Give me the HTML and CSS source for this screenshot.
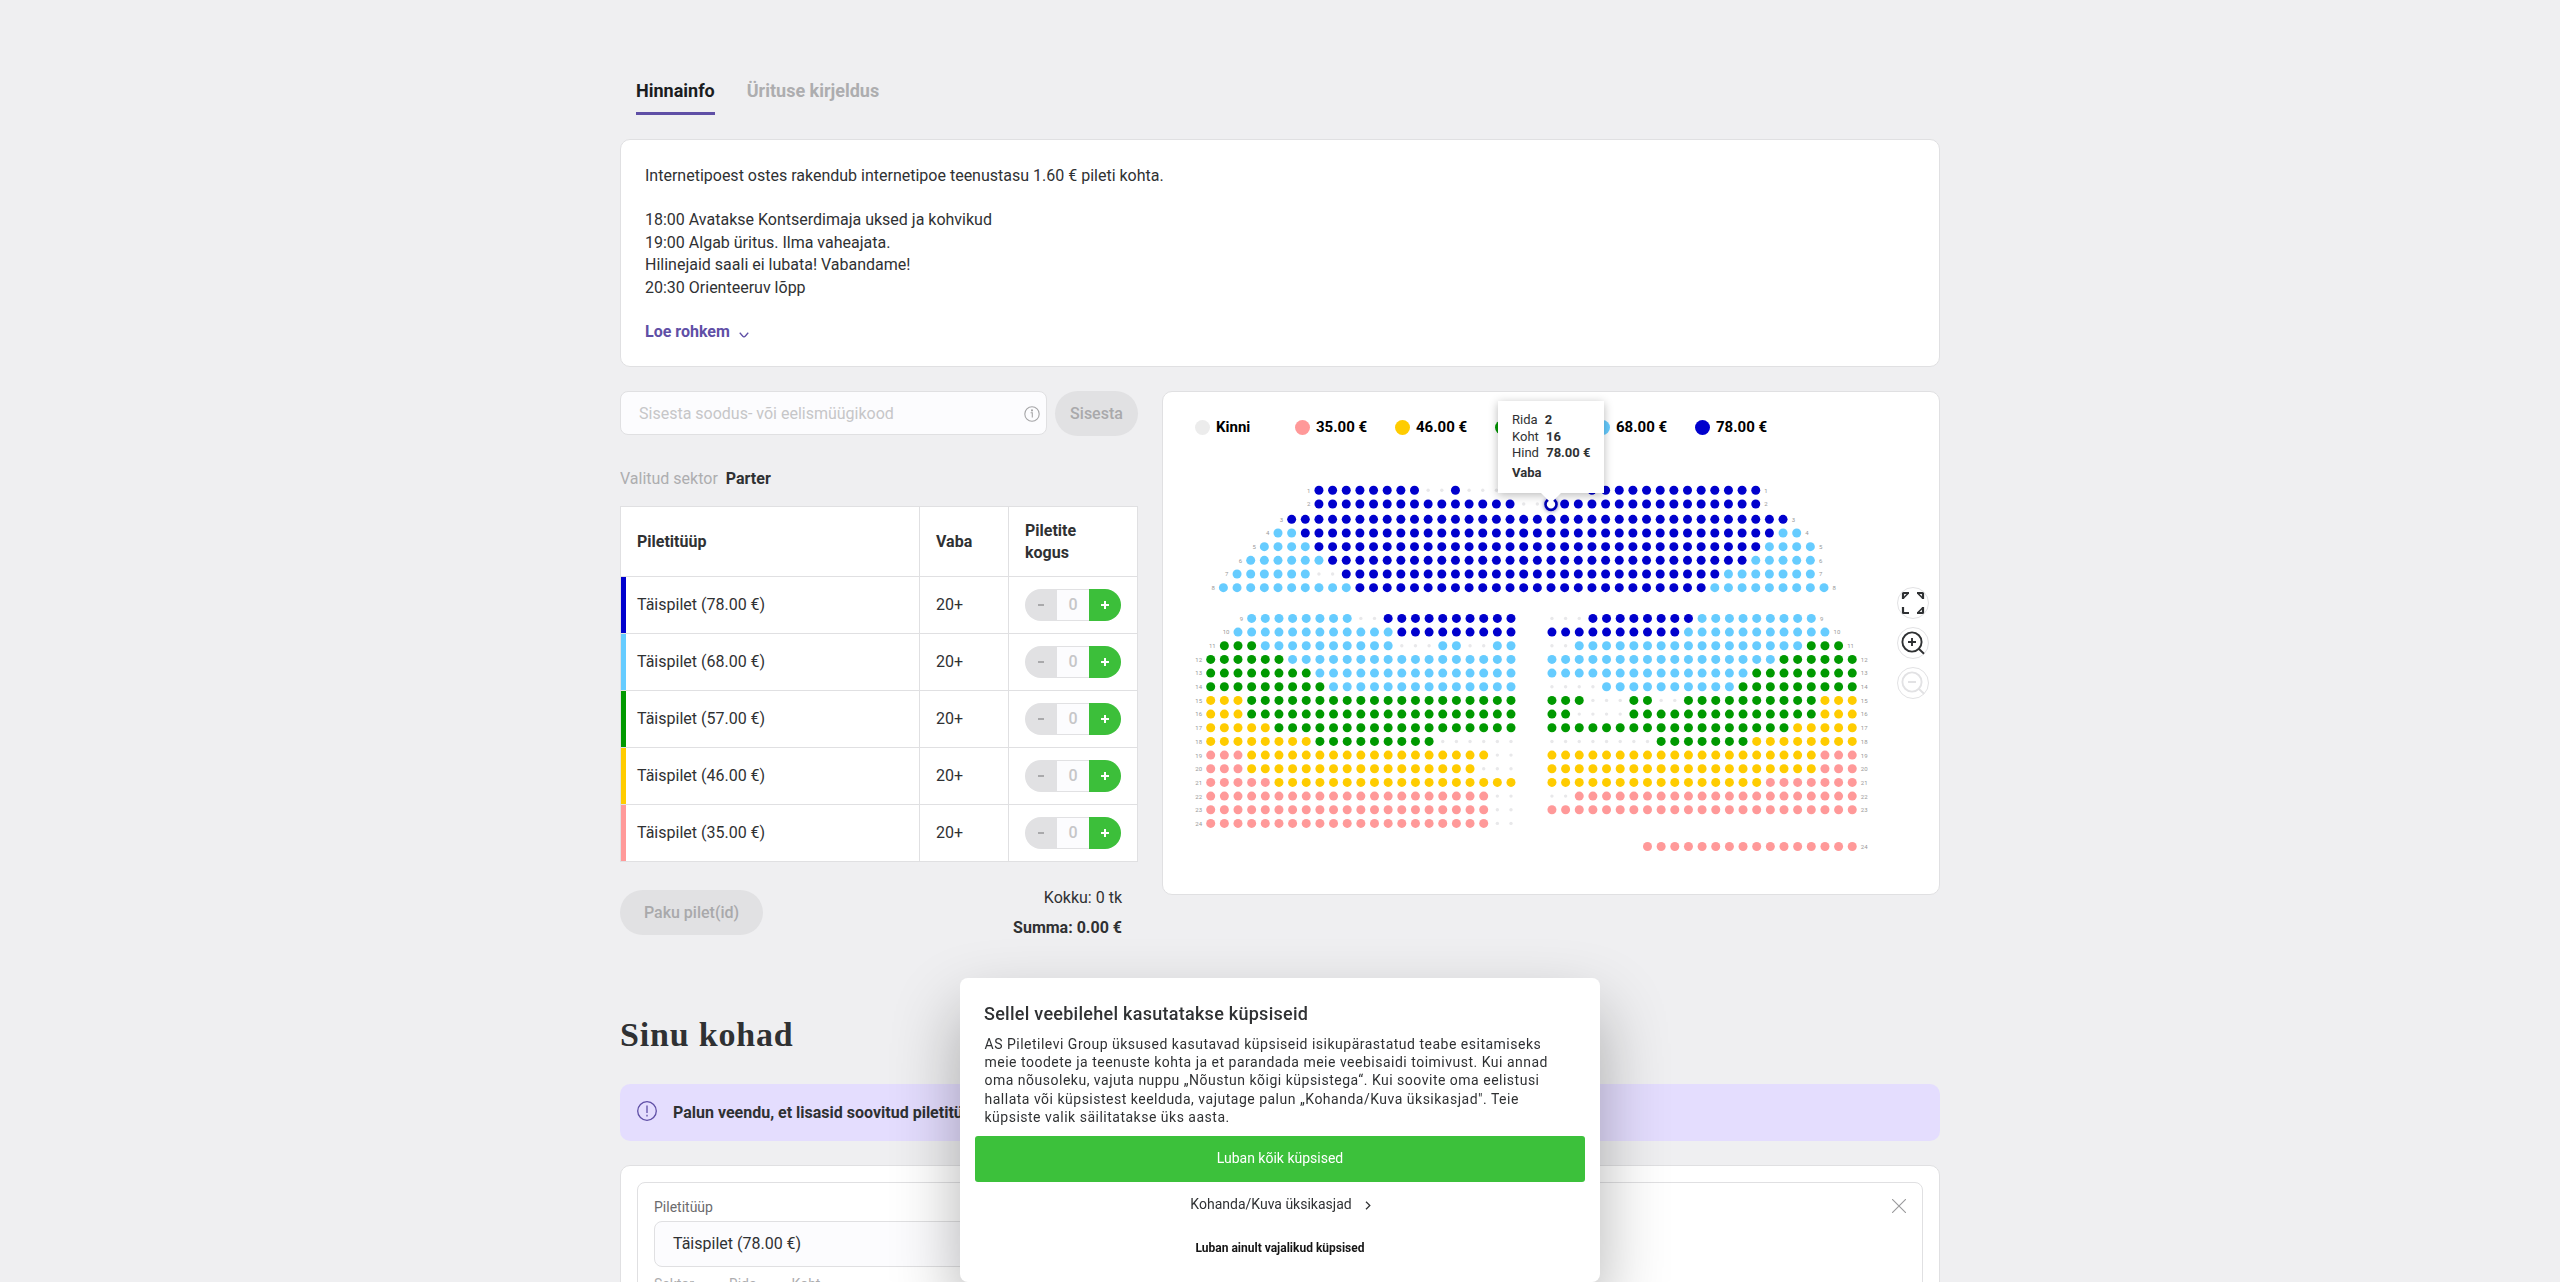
FILE: index.html
```html
<!DOCTYPE html>
<html lang="et">
<head>
<meta charset="utf-8">
<title>Piletid</title>
<link rel="stylesheet" href="styles.css">
</head>
<body>
<main class="page">
  <nav class="tabs">
    <a class="tab tab-active">Hinnainfo</a>
    <a class="tab">Ürituse kirjeldus</a>
  </nav>

  <section class="card info">
    <p>Internetipoest ostes rakendub internetipoe teenustasu 1.60 € pileti kohta.</p>
    <p class="gap-above">18:00 Avatakse Kontserdimaja uksed ja kohvikud</p>
    <p>19:00 Algab üritus. Ilma vaheajata.</p>
    <p>Hilinejaid saali ei lubata! Vabandame!</p>
    <p>20:30 Orienteeruv lõpp</p>
    <a class="more gap-above">Loe rohkem
      <svg width="10" height="6" viewBox="0 0 10 6"><path d="M.7.8 C2.5 2.5 3.6 4.6 5 5 C6.4 4.6 7.5 2.5 9.3.8" fill="none" stroke="currentColor" stroke-width="1.3"/></svg>
    </a>
  </section>

  <div class="columns">
    <section class="left">
      <div class="promo">
        <div class="input"><span>Sisesta soodus- või eelismüügikood</span>
          <svg width="16" height="16" viewBox="0 0 16 16" fill="none" stroke="#a5a5a7" stroke-width="1.1"><circle cx="8" cy="8" r="7.2"/><path d="M6.6 6.8H8.3V11.6"/><circle cx="8" cy="4.4" r=".5" fill="#a5a5a7"/></svg>
        </div>
        <button class="pill pill-small">Sisesta</button>
      </div>
      <p class="sector">Valitud sektor <b>Parter</b></p>
      <div class="table">
        <div class="row head"><div>Piletitüüp</div><div>Vaba</div><div>Piletite kogus</div></div>
        <div class="row p78"><div>Täispilet (78.00 €)</div><div>20+</div><div><span class="stepper"><i class="minus"></i><em>0</em><i class="plus"></i></span></div></div>
        <div class="row p68"><div>Täispilet (68.00 €)</div><div>20+</div><div><span class="stepper"><i class="minus"></i><em>0</em><i class="plus"></i></span></div></div>
        <div class="row p57"><div>Täispilet (57.00 €)</div><div>20+</div><div><span class="stepper"><i class="minus"></i><em>0</em><i class="plus"></i></span></div></div>
        <div class="row p46"><div>Täispilet (46.00 €)</div><div>20+</div><div><span class="stepper"><i class="minus"></i><em>0</em><i class="plus"></i></span></div></div>
        <div class="row p35"><div>Täispilet (35.00 €)</div><div>20+</div><div><span class="stepper"><i class="minus"></i><em>0</em><i class="plus"></i></span></div></div>
      </div>
      <div class="summary">
        <button class="pill pill-wide">Paku pilet(id)</button>
        <div class="totals"><p>Kokku: 0 tk</p><p><b>Summa: 0.00 €</b></p></div>
      </div>
    </section>

    <section class="card map">
      <ul class="legend">
        <li class="sold">Kinni</li>
        <li class="p35">35.00 €</li>
        <li class="p46">46.00 €</li>
        <li class="p57">57.00 €</li>
        <li class="p68">68.00 €</li>
        <li class="p78">78.00 €</li>
      </ul>
      <svg id="seats" class="seats" width="776" height="440" viewBox="-1 62 776 440"></svg>
      <div class="tooltip">
        <p>Rida <b>2</b></p><p>Koht <b>16</b></p><p>Hind <b>78.00 €</b></p><p class="free">Vaba</p>
      </div>
      <div class="controls">
        <span><svg width="24" height="24" viewBox="0 0 24 24" fill="none" stroke="#2f3133" stroke-width="2.2"><path d="M2 8V2.5Q2 2 2.5 2H8M16 2H21.5Q22 2 22 2.5V8M22 16V21.5Q22 22 21.5 22H16M8 22H2.5Q2 22 2 21.5V16"/><path d="M2.5 7L7 2.5M17 2.5L21.5 7M21.5 17L17 21.5" stroke-width="1.6"/></svg></span>
        <span><svg width="24" height="24" viewBox="0 0 24 24" fill="none" stroke="#2f3133" stroke-width="1.9"><circle cx="11" cy="11" r="9.6"/><path d="M11 7V15M7 11H15M17.5 17.5L23 22.8"/></svg></span>
        <span><svg width="24" height="24" viewBox="0 0 24 24" fill="none" stroke="#e2e2e4" stroke-width="1.9"><circle cx="11" cy="11" r="9.6"/><path d="M7 11H15M17.5 17.5L23 22.8"/></svg></span>
      </div>
    </section>
  </div>

  <h2>Sinu kohad</h2>
  <div class="alert">
    <svg width="20" height="20" viewBox="0 0 20 20" fill="none" stroke="#5f4fa6"><circle cx="10" cy="10" r="9.3" stroke-width="1.3"/><path d="M10 4.5V12M10 13.8V15.4" stroke-width="1.3"/></svg>
    <b>Palun veendu, et lisasid soovitud piletitüübid</b>
  </div>
  <section class="card order">
    <div class="order-item">
      <div class="order-top"><label>Piletitüüp</label>
        <svg width="14" height="14" viewBox="0 0 14 14"><path d="M0 0L14 14M14 0L0 14" stroke="#9a9a9c" stroke-width="1.1"/></svg></div>
      <div class="select">Täispilet (78.00 €)</div>
      <div class="seat-labels"><span>Sektor</span><span>Rida</span><span>Koht</span></div>
    </div>
  </section>
</main>

<aside class="cookies">
  <h3>Sellel veebilehel kasutatakse küpsiseid</h3>
  <p>AS Piletilevi Group üksused kasutavad küpsiseid isikupärastatud teabe esitamiseks<br>meie toodete ja teenuste kohta ja et parandada meie veebisaidi toimivust. Kui annad<br>oma nõusoleku, vajuta nuppu „Nõustun kõigi küpsistega“. Kui soovite oma eelistusi<br>hallata või küpsistest keelduda, vajutage palun „Kohanda/Kuva üksikasjad". Teie<br>küpsiste valik säilitatakse üks aasta.</p>
  <button class="accept">Luban kõik küpsised</button>
  <a class="customize">Kohanda/Kuva üksikasjad
    <svg width="6" height="9" viewBox="0 0 6 9"><path d="M1 .7L4.8 4.5L1 8.3" fill="none" stroke="currentColor" stroke-width="1.3"/></svg></a>
  <a class="necessary">Luban ainult vajalikud küpsised</a>
</aside>
<script src="seats.js"></script>
</body>
</html>
```
FILE: styles.css
```css
* { box-sizing: border-box; margin: 0; padding: 0; }
html { height: 100%; overflow: hidden; }
body {
  height: 1282px; overflow: hidden; background: #efeff1; color: #2f3133;
  font: 16px/22.4px Roboto, "Liberation Sans", sans-serif;
}
button { border: 0; font: inherit; }
b { font-weight: 700; }
svg { display: block; flex: none; }
.page { width: 1320px; height: 1282px; overflow: hidden; margin: 0 auto; padding-top: 78px; }

.p78 { --price: #0000cd; }
.p68 { --price: #66ccff; }
.p57 { --price: #009900; }
.p46 { --price: #ffcc00; }
.p35 { --price: #ff9999; }
.sold { --price: #ececec; }

.tabs { display: flex; gap: 32px; padding-left: 16px; height: 61px; }
.tab { height: 37px; font-size: 18px; line-height: 26px; font-weight: 700; color: #adadaf; }
.tab-active { color: #1b1d1f; border-bottom: 3px solid #5f4fa6; }

.card { background: #fff; border: 1px solid #e0e0e2; border-radius: 10px; }
.info { height: 228px; padding: 24.5px 24px 0; }
.gap-above { margin-top: 22.4px; }
.more { display: flex; align-items: center; gap: 9px; color: #5f4fa6; font-weight: 700; }
.more svg { margin-top: 4px; }

.columns { display: flex; justify-content: space-between; align-items: flex-start; margin-top: 24px; }
.left { width: 518px; }
.promo { display: flex; justify-content: space-between; }
.input {
  display: flex; align-items: center; justify-content: space-between; width: 427px; height: 44px;
  padding: 0 6px 0 18px; background: #fcfcfe; border: 1px solid #e0e0e2; border-radius: 8px; color: #c6c6c8;
}
.input span { padding-top: 2px; }
.input svg { margin-top: 2px; }
.pill { height: 45px; border-radius: 23px; background: #e1e1e3; color: #a9a9ab; font-weight: 500; }
.pill-small { width: 83px; padding-top: 1px; }
.pill-wide { width: 143px; }
.sector { margin-top: 32px; color: #adadaf; }
.sector b { margin-left: 4px; color: #2f3133; }

.table { margin-top: 16px; border: 1px solid #e0e0e2; background: #fff; }
.row { display: grid; grid-template-columns: 298px 89px 129px; height: 57px; box-shadow: inset 5px 0 var(--price, transparent); border-top: 1px solid #e0e0e2; }
.row > div { display: flex; align-items: center; padding-left: 16px; }
.row > div + div { border-left: 1px solid #e0e0e2; }
.head { height: 69px; border-top: 0; font-weight: 700; }
.head > div:last-child { padding-right: 40px; }
.stepper { display: flex; width: 96px; height: 32px; border-radius: 16px; overflow: hidden; }
.stepper > * { display: flex; width: 32px; align-items: center; justify-content: center; }
.stepper em { border: solid #e1e1e3; border-width: 1px 0; background: #fcfcfe; color: #c6c6c8; font-style: normal; font-weight: 500; }
.minus { background: #e1e1e3; }
.plus { background: linear-gradient(#fff, #fff) center / 2px 8px no-repeat, #3cbf3a; }
.minus::before, .plus::before { content: ""; width: 6px; height: 2px; background: #a9a9ab; }
.plus::before { width: 8px; background: #fff; }

.summary { display: flex; justify-content: space-between; align-items: flex-start; margin-top: 28px; }
.totals { padding-right: 16px; text-align: right; line-height: 30px; margin-top: -7px; }

.map { position: relative; width: 778px; height: 504px; }
.legend { display: flex; height: 62px; padding: 28px 0 0 32px; list-style: none; color: #000; font-size: 15px; line-height: 15px; font-weight: 700; }
.legend li { display: flex; gap: 6px; width: 100px; height: 15px; }
.legend li::before { content: ""; width: 15px; height: 15px; border-radius: 50%; background: var(--price); }
.seats text { font-size: 6px; fill: #999; }
.tooltip {
  position: absolute; left: 335px; top: 9px; width: 106px; height: 92px; padding: 11px 0 0 14px;
  background: #fff; box-shadow: 0 2px 9px rgba(0, 0, 0, .28); font-size: 13px; line-height: 16.5px; white-space: nowrap;
}
.tooltip b { margin-left: 4px; }
.tooltip .free { margin-top: 3px; font-weight: 700; }
.tooltip::after { content: ""; position: absolute; left: 43px; top: 92px; border: solid transparent; border-width: 10px 10px 0; border-top-color: #fff; }
.controls { position: absolute; right: 10px; top: 195px; display: grid; gap: 8px; }
.controls span { display: grid; place-items: center; width: 32px; height: 32px; border: 1px solid #e2e2e4; border-radius: 50%; background: #fff; }

h2 { margin: 72px 0 0; font: 700 34px/40px "Liberation Serif", serif; letter-spacing: .8px; }
.alert { display: flex; gap: 16px; height: 57px; margin-top: 28.6px; padding: 17px; border-radius: 10px; background: #e4ddfe; }
.alert b { line-height: 23px; }
.order { height: 240px; margin-top: 24px; padding: 16px; border-radius: 10px; }
.order-item { height: 210px; padding: 16px; border: 1px solid #e0e0e2; border-radius: 8px; font-size: 14px; line-height: 16px; }
.order-top { display: flex; justify-content: space-between; height: 22px; color: #6b6b6d; }
.select { width: 600px; height: 46px; padding-left: 18px; border: 1px solid #e0e0e2; border-radius: 8px; background: #fcfcfe; font-size: 16px; line-height: 44px; }
.seat-labels { display: flex; gap: 35px; margin-top: 9px; color: #adadaf; }

.cookies {
  position: fixed; left: 50%; bottom: 0; width: 640px; height: 304px; margin-left: -320px; padding: 24px 15px 0;
  background: #fff; border-radius: 8px; box-shadow: 0 32px 68px rgba(0, 0, 0, .3);
  display: flex; flex-direction: column; align-items: center;
}
.cookies h3 { align-self: stretch; padding-left: 9px; font-size: 18px; line-height: 24px; font-weight: 500; letter-spacing: .27px; }
.cookies p { align-self: stretch; padding-left: 9.5px; margin-top: 9px; font-size: 14px; line-height: 18.2px; letter-spacing: .5px; white-space: nowrap; }
.accept { width: 610px; height: 46px; margin-top: 10px; padding-bottom: 2px; border-radius: 3px; background: #3cc13b; color: #fff; font-size: 14px; }
.customize { display: flex; align-items: center; gap: 13px; margin-top: 11px; padding-left: 1px; font-size: 14px; }
.customize svg { margin-top: 3px; }
.necessary { margin-top: 22px; color: #141414; font-size: 12px; font-weight: 700; }
```
FILE: seats.js
```js
// Seat codes: b 78.00, l 68.00, g 57.00, y 46.00, p 35.00, x taken, s hovered, _ aisle.
const COLORS = { b: '#0000cd', l: '#66ccff', g: '#009900', y: '#ffcc00', p: '#ff9999' };
const NS = 'http://www.w3.org/2000/svg';
const svg = document.getElementById('seats');

function add(name, attrs, text) {
  const el = document.createElementNS(NS, name);
  for (const key in attrs) el.setAttribute(key, attrs[key]);
  if (text) el.textContent = text;
  svg.appendChild(el);
}

function drawRow(label, y, origin, start, runs, sides) {
  let col = start;
  for (const run of runs.split(' ')) {
    const kind = run[0];
    for (let i = 0; i < Number(run.slice(1)); i++, col++) {
      const cx = (origin + col * 13.65).toFixed(2);
      if (kind === '_') continue;
      if (kind === 'x') add('circle', { cx, cy: y, r: 1.7, fill: '#e8e8ea' });
      else if (kind === 's') {
        add('circle', { cx, cy: y + .4, r: 5.5, fill: '#fff', stroke: '#0000b4', 'stroke-width': 2.6, style: 'filter:drop-shadow(0 0 2px rgba(0,0,120,.5))' });
      } else add('circle', { cx, cy: y, r: 4.5, fill: COLORS[kind] });
    }
  }
  if (sides !== 'right') add('text', { x: origin + start * 13.65 - 8.6, y: y + 2.4, 'text-anchor': 'end' }, label);
  if (sides !== 'left') add('text', { x: origin + (col - 1) * 13.65 + 8.6, y: y + 2.4 }, label);
}

[
  [-17, 'b8 x2 b1 x9 b13'],
  [-17, 'b15 x2 s1 b15'],
  [-19, 'b37'],
  [-20, 'l2 b35 l2'],
  [-21, 'l4 b33 l4'],
  [-22, 'l6 b31 l5'],
  [-23, 'l6 x2 b28 l7'],
  [-24, 'l10 b26 l9']
].forEach(([start, runs], i) => drawRow(String(i + 1), 98.3 + i * 13.67 + (i > 1 ? 1.7 : 0), 387, start, runs));

[
  [3, 'l8 x2 b10 _2 x3 b8 l9'],
  [2, 'l12 b9 _2 b10 l11'],
  [1, 'g3 l10 x3 l2 x2 l2 _2 x2 l17 g3'],
  [0, 'g6 l17 _2 l17 g6'],
  [0, 'g8 l15 _2 l15 g8'],
  [0, 'g9 l14 _2 x4 l10 g9'],
  [0, 'y3 g20 _2 g3 x3 g2 x2 g10 y3'],
  [0, 'y3 g20 _2 g2 x4 g14 y3'],
  [0, 'y5 g18 _2 g18 y5'],
  [0, 'y8 g9 x6 _2 x8 g7 y8'],
  [0, 'p3 y18 x2 _2 y20 p3'],
  [0, 'p3 y17 x3 _2 y20 p3'],
  [0, 'p5 y18 _2 y16 p7'],
  [0, 'p21 x2 _2 x2 p21'],
  [0, 'p21 x2 _2 p23']
].forEach(([start, runs], i) => drawRow(String(i + 9), 226.4 + i * 13.67, 46.7, start, runs));

drawRow('24', 431.4, 46.7, 0, 'p21 x2', 'left');
drawRow('24', 454.5, 46.7, 32, 'p16', 'right');
```
